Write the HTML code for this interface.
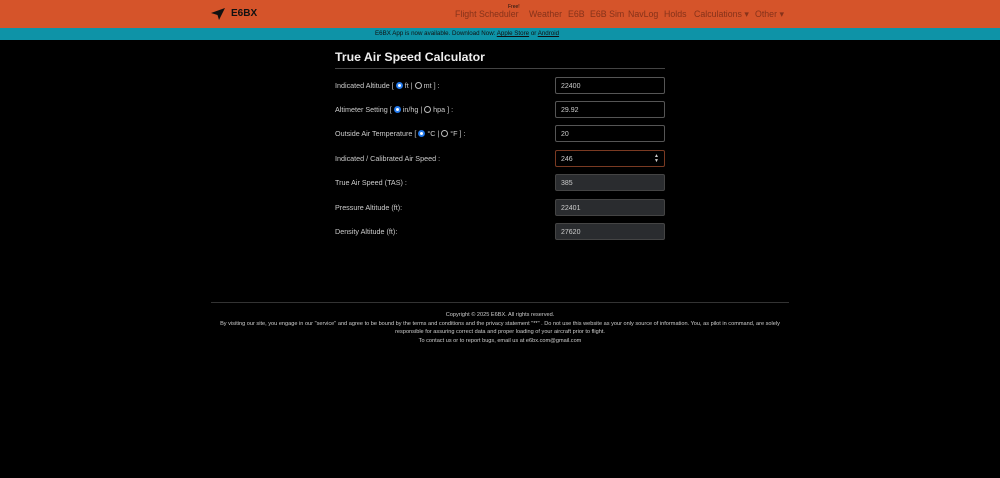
<!DOCTYPE html>
<html><head><meta charset="utf-8"><style>
body{margin:0;background:#000;font-family:"Liberation Sans",sans-serif;color:#ddd;width:1000px;height:478px;overflow:hidden;position:relative}
.nav{position:absolute;top:0;left:0;width:1000px;height:28px;background:#d5542a}
.brand{position:absolute;top:8px;font-size:10px;font-weight:bold;color:#111}
.links{position:absolute;top:9px;left:0;font-size:8.8px;color:#86321a}
.links span{position:absolute;white-space:nowrap}
.bar{position:absolute;top:28px;width:1000px;height:12px;background:#0e93a7;font-size:6.2px;line-height:12px;color:#111}
.bar u{color:#111}
h1{position:absolute;left:335px;top:50px;margin:0;font-size:12.3px;font-weight:bold;color:#eee}
.hr{position:absolute;left:335px;top:68px;width:330px;height:1px;background:#444}
.lab{position:absolute;left:335px;font-size:7.2px;color:#ccc}
.in{position:absolute;left:555px;width:110px;height:17px;border:1px solid #555;border-radius:2px;font-size:7px;line-height:17px;padding-left:5px;box-sizing:border-box;color:#ccc;background:#000}
.ro{background:#2a2c2f;border-color:#444}
.r{display:inline-block;width:5px;height:5px;border-radius:50%;border:1px solid #bbb;vertical-align:-1px}
.r.on{border:1.5px solid #1a73e8;background:#fff;box-shadow:inset 0 0 0 1px #1a73e8}
.fhr{position:absolute;left:211px;top:302px;width:578px;height:1px;background:#333}
.foot{position:absolute;left:211px;width:578px;top:311px;text-align:center;font-size:5.6px;line-height:8.5px;color:#ccc}
</style></head><body>
<div class="nav">
<svg style="position:absolute;left:211px;top:8px" width="14" height="12" viewBox="0 0 14 12"><path d="M0 5 L14 0 L8 12 L6.5 7 Z" fill="#111"/></svg>
<div class="brand" style="left:231px">E6BX</div>
<div class="links">
<span style="left:455px">Flight Scheduler</span><span style="left:508px;top:-5px;font-size:5px;color:#111">Free!</span>
<span style="left:529px">Weather</span><span style="left:568px">E6B</span><span style="left:590px">E6B Sim</span>
<span style="left:628px">NavLog</span><span style="left:664px">Holds</span><span style="left:694px">Calculations ▾</span><span style="left:755px">Other ▾</span>
</div></div>
<div class="bar"><span style="position:absolute;left:375px">E6BX App is now available. Download Now: <u>Apple Store</u> or <u>Android</u></span></div>
<h1>True Air Speed Calculator</h1><div class="hr"></div>
<div class="lab" style="top:81px">Indicated Altitude [ <span class="r on"></span> ft | <span class="r"></span> mt ] :</div><div class="in" style="top:77px">22400</div>
<div class="lab" style="top:105px">Altimeter Setting [ <span class="r on"></span> in/hg | <span class="r"></span> hpa ] :</div><div class="in" style="top:101px">29.92</div>
<div class="lab" style="top:129px">Outside Air Temperature [ <span class="r on"></span> °C | <span class="r"></span> °F ] :</div><div class="in" style="top:125px">20</div>
<div class="lab" style="top:154px">Indicated / Calibrated Air Speed :</div><div class="in" style="top:150px;border-color:#7a3a22">246<span style="position:absolute;right:5px;font-size:5px;line-height:5px;top:3px">▲<br>▼</span></div>
<div class="lab" style="top:178px">True Air Speed (TAS) :</div><div class="in ro" style="top:174px">385</div>
<div class="lab" style="top:203px">Pressure Altitude (ft):</div><div class="in ro" style="top:199px">22401</div>
<div class="lab" style="top:227px">Density Altitude (ft):</div><div class="in ro" style="top:223px">27620</div>
<div class="fhr"></div>
<div class="foot">Copyright © 2025 E6BX. All rights reserved.<br>By visiting our site, you engage in our "service" and agree to be bound by the terms and conditions and the privacy statement "**" . Do not use this website as your only source of information. You, as pilot in command, are solely responsible for assuring correct data and proper loading of your aircraft prior to flight.<br>To contact us or to report bugs, email us at e6bx.com@gmail.com</div>
</body></html>
